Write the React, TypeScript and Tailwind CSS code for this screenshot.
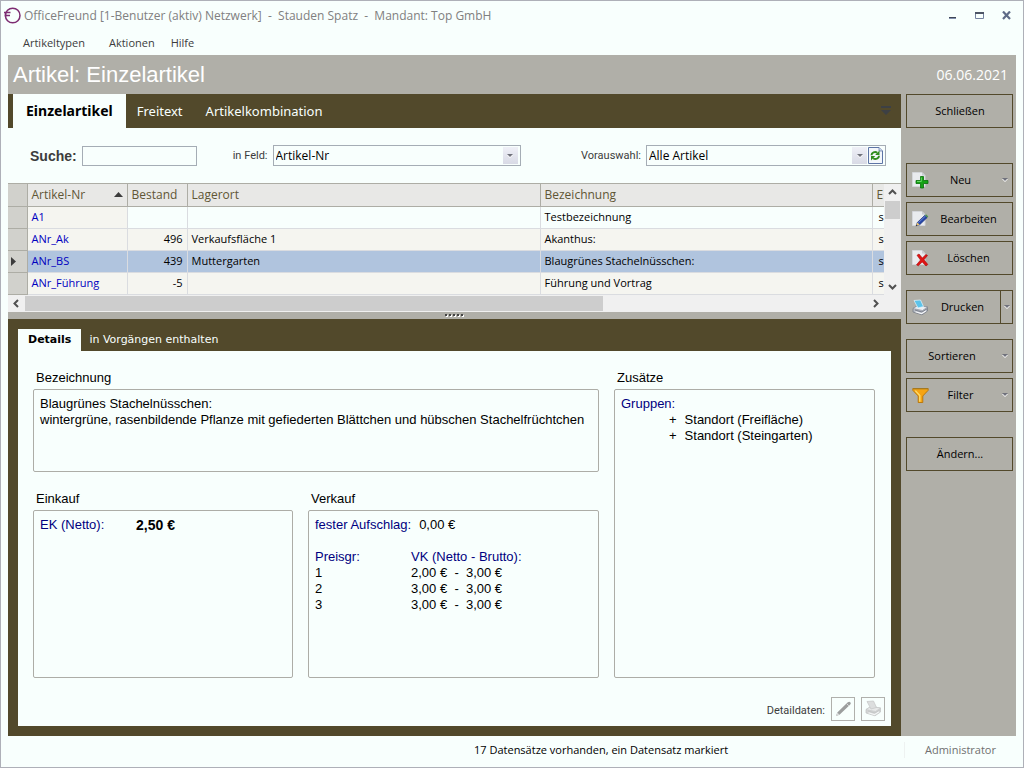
import { useState } from 'react';
import type { ReactNode } from 'react';

interface Article {
  nr: string;
  stock: string;
  place: string;
  label: string;
  shaded: boolean;
}

const articles: Article[] = [
  { nr: 'A1', stock: '', place: '', label: 'Testbezeichnung', shaded: false },
  { nr: 'ANr_Ak', stock: '496', place: 'Verkaufsfläche 1', label: 'Akanthus:', shaded: true },
  { nr: 'ANr_BS', stock: '439', place: 'Muttergarten', label: 'Blaugrünes Stachelnüsschen:', shaded: true },
  { nr: 'ANr_Führung', stock: '-5', place: '', label: 'Führung und Vortrag', shaded: true },
];

const prices = [
  { group: '1', net: '2,00 €', gross: '3,00 €' },
  { group: '2', net: '3,00 €', gross: '3,00 €' },
  { group: '3', net: '3,00 €', gross: '3,00 €' },
];

const Logo = () => (
  <svg width="17" height="17" viewBox="0 0 17 17" fill="none" stroke="#7d2c72" strokeWidth="1.5">
    <circle cx="8.7" cy="8.5" r="7.3" />
    <path d="M0 5.500H6.500M1 8.500H6M1.500 5v4.500" />
  </svg>
);

const Caret = ({ className }: { className?: string }) => (
  <svg width="6" height="4" viewBox="0 0 6 4" className={className}>
    <path d="M0 1h6L3 4z" fill="#fff" />
    <path d="M0 0h6L3 3z" fill="#70727c" />
  </svg>
);

const Sheet = () => (
  <>
    <path d="M0.5 0.5H10L13 3.5V14.5H0.5z" fill="#e9ebee" stroke="#d4d6da" />
    <path d="M10 0.5V3.5H13z" fill="#c9ccd2" />
  </>
);

const NewIcon = () => (
  <svg width="17" height="17" viewBox="0 0 17 17">
    <Sheet />
    <path d="M8.5 4.5h3v4h4.5v3h-4.500v4.500h-3v-4.500h-4.500v-3h4.500z" fill="#16a316" stroke="#087008" strokeWidth="0.8" />
    <path d="M9.300 5.500v4h-4.300" fill="none" stroke="#67d867" />
  </svg>
);

const EditIcon = () => (
  <svg width="17" height="17" viewBox="0 0 17 17">
    <Sheet />
    <path d="M4.200 14.800L5.300 11.500L12.800 4.300L15.200 6.500L7.700 13.800z" fill="#2545a8" stroke="#152a70" strokeWidth="0.6" />
    <path d="M12.800 4.300L14 3.200L16.300 5.400L15.200 6.500z" fill="#4a8f50" />
    <path d="M4.200 14.800L5.300 11.500L7.700 13.800z" fill="#f0c66a" />
    <path d="M6.300 11.800L13.500 5" stroke="#7f9be0" strokeWidth="0.8" />
    <path d="M3.800 15.200l.6-1.500.9.900z" fill="#222" />
  </svg>
);

const DeleteIcon = () => (
  <svg width="17" height="17" viewBox="0 0 17 17">
    <Sheet />
    <path d="M5 5.300L7 4L10.300 8L14 4.500L15.500 5.500L12 9.800L15.800 14.500L14 16L10.200 12L6.300 15.800L4.500 14.800L8.500 10z" fill="#e01414" stroke="#a80808" strokeWidth="0.600" />
  </svg>
);

const PrinterIcon = ({ muted }: { muted?: boolean }) => (
  <svg width="17" height="17" viewBox="0 0 17 17">
    <path d="M1 9.500L6 6.500L15.500 8V12L10 15.800L1 13z" fill={muted ? '#d2d4d4' : '#b7bcc5'} stroke={muted ? '#c4c6c6' : '#777d88'} strokeWidth="0.8" />
    <path d="M1 9.500L6 6.500L15.500 8L10.500 11.500z" fill={muted ? '#e6e8e8' : '#eceef2'} stroke={muted ? '#c4c6c6' : '#858b96'} strokeWidth="0.600" />
    <path d="M2 1.500L8.500 1L11.500 7.500L6 9z" fill={muted ? '#dcdede' : '#5cc3ea'} stroke={muted ? '#c4c6c6' : '#e4f5fc'} strokeWidth="0.700" />
    <path d="M3.500 12.800L9.500 14.600L14 11.800" fill="none" stroke={muted ? '#f4f6f6' : '#f7f8fa'} strokeWidth="1.200" />
    <path d="M3 11L10 13L15 9.800" fill="none" stroke={muted ? '#bfc1c1' : '#636975'} strokeWidth="0.700" />
  </svg>
);

const FilterIcon = () => (
  <svg width="17" height="17" viewBox="0 0 17 17">
    <path d="M0.800 1.500H16.200V3.300L10.800 9V15.500H6.200V9L0.800 3.300z" fill="#f6a413" stroke="#b87508" strokeWidth="0.900" />
    <path d="M3.300 3.600L7.800 8.500V14.800" fill="none" stroke="#ffdc67" strokeWidth="1.400" />
    <path d="M1 1.800H16" stroke="#9a7a2a" />
  </svg>
);

const RefreshIcon = () => (
  <svg width="15" height="17" viewBox="0 0 15 17">
    <path d="M0.500 0.500H11L14.500 4V16.500H0.500z" fill="#f3f7fb" stroke="#5d74a5" />
    <path d="M11 0.500V4H14.500" fill="#cdd8ea" stroke="#5d74a5" strokeWidth="0.700" />
    <path d="M3.500 8.200C3.500 5.500 7 4 9.300 5.700" fill="none" stroke="#2f8c1d" strokeWidth="2" />
    <path d="M11.500 3.500V8H7.200z" fill="#2f8c1d" />
    <path d="M11 8.800C11 11.500 7.500 13 5.200 11.300" fill="none" stroke="#2f8c1d" strokeWidth="2" />
    <path d="M3 13.500V9H7.300z" fill="#2f8c1d" />
  </svg>
);

const PencilIcon = () => (
  <svg width="17" height="17" viewBox="0 0 17 17">
    <path d="M1 16L2.300 12.500L12.500 2.500Q14.500 1 15.500 2.500Q16.500 3.500 14.800 5L4.500 14.800z" fill="#9c9e9e" />
    <path d="M1 16L2.300 12.500L4.500 14.800z" fill="#d8dada" />
    <path d="M11.500 3.500L13.800 5.800" stroke="#d8dada" />
  </svg>
);

interface SideButtonProps {
  title: string;
  icon?: ReactNode;
  menu?: boolean;
  split?: boolean;
  className?: string;
}

const SideButton = ({ title, icon, menu, split, className = '' }: SideButtonProps) => (
  <div className={`flex h-[34px] border border-[#52492b] text-black ${className}`}>
    <button type="button" className="flex min-w-0 flex-1 items-center pl-[5px] pr-1">
      {icon && <span className="w-[17px] shrink-0">{icon}</span>}
      <span className={`flex-1 text-center ${menu ? 'pr-2.5' : ''}`}>{title}</span>
      {menu && <Caret />}
    </button>
    {split && (
      <button type="button" aria-label={`${title} Optionen`} className="flex w-3 items-center justify-center border-l border-[#52492b]">
        <Caret />
      </button>
    )}
  </div>
);

interface DropDownProps {
  id: string;
  value: string;
  className: string;
  children?: ReactNode;
}

const DropDown = ({ id, value, className, children }: DropDownProps) => (
  <div className={`relative flex h-[21px] border border-[#a5adb5] ${className}`}>
    <select id={id} className="min-w-0 flex-1 appearance-none bg-transparent pl-0.5 text-black outline-none">
      <option>{value}</option>
    </select>
    <span className={`pointer-events-none absolute top-px flex h-[17px] w-[15px] items-center justify-center bg-linear-to-b from-[#eff0f7] to-[#d8dae5] ${children ? 'right-[18px]' : 'right-0.5'}`}>
      <Caret />
    </span>
    {children}
  </div>
);

const Chevron = ({ d }: { d: string }) => (
  <svg width="9" height="9" viewBox="0 0 9 9" fill="none" stroke="#505050" strokeWidth="2">
    <path d={d} />
  </svg>
);

const Group = ({ title, className = '', children }: { title: string; className?: string; children: ReactNode }) => (
  <section className={`flex flex-col ${className}`}>
    <h3 className="h-[22px] pl-[3px] leading-[22px]">{title}</h3>
    <div className="flex-1 rounded-xs border border-[#adada7] px-1.5 py-1.5">{children}</div>
  </section>
);

const ArticleTable = () => (
  <table className="w-full table-fixed border-collapse">
    <colgroup>
      <col className="w-[19px]" />
      <col className="w-[100px]" />
      <col className="w-[60px]" />
      <col className="w-[353px]" />
      <col />
      <col className="w-3" />
    </colgroup>
    <thead>
      <tr className="h-[22px] bg-[#e8e8e6] text-left text-[#5f5635]">
        <th className="border-r border-b border-[#adada5] bg-[#d1d1cc]"></th>
        <th className="border-r border-b border-[#adada5] px-1 font-normal">
          <span className="flex items-center justify-between">
            Artikel-Nr
            <svg width="9" height="5" viewBox="0 0 9 5"><path d="M0 5L4.500 0L9 5z" fill="#3c3c3c" /></svg>
          </span>
        </th>
        <th className="border-r border-b border-[#adada5] px-1 font-normal">Bestand</th>
        <th className="border-r border-b border-[#adada5] px-1 font-normal">Lagerort</th>
        <th className="border-r border-b border-[#adada5] px-1 font-normal">Bezeichnung</th>
        <th className="overflow-hidden border-b border-[#adada5] pl-1 font-normal">E</th>
      </tr>
    </thead>
    <tbody className="text-[11px] text-black">
      {articles.map((row) => {
        const active = row.nr === 'ANr_BS';
        const bg = active ? 'bg-[#b0c4de]' : row.shaded ? 'bg-[#f5f5f0]' : '';
        return (
          <tr key={row.nr} className={`h-[22px] ${bg}`}>
            <td className="border-r border-b border-[#adada5] bg-[#d1d1cc] pl-[3px]">
              {active && <svg width="5" height="9" viewBox="0 0 5 9"><path d="M0 0L5 4.500L0 9z" fill="#3c3c3c" /></svg>}
            </td>
            <td className={`border-r border-b border-[#dadce0] px-1 text-[#0000c0] ${active ? '' : 'bg-[#f5f5f0]'}`}>{row.nr}</td>
            <td className="border-r border-b border-[#dadce0] px-1 text-right">{row.stock}</td>
            <td className="border-r border-b border-[#dadce0] px-1">{row.place}</td>
            <td className="border-r border-b border-[#dadce0] px-1">{row.label}</td>
            <td className="overflow-hidden border-b border-[#dadce0] pl-1.5">s</td>
          </tr>
        );
      })}
    </tbody>
  </table>
);

const App = () => {
  const [search, setSearch] = useState('');

  return (
    <div className="flex min-h-screen flex-col border border-[#aeb0b8] bg-[#f8fffd] px-[7px] font-['Open_Sans','Noto_Sans',sans-serif] text-[12px] leading-4 text-[#3c3c3c]">
      {/* Title bar */}
      <header className="flex h-[29px] items-center justify-between text-[#808080]">
        <div className="-ml-1 flex items-center gap-[3px]">
          <Logo />
          <h1 className="whitespace-pre">OfficeFreund [1-Benutzer (aktiv) Netzwerk]  -  Stauden Spatz  -  Mandant: Top GmbH</h1>
        </div>
        <div className="flex items-center gap-[18px] pr-[5px]">
          <button type="button" aria-label="Minimieren">
            <svg width="9" height="9" viewBox="0 0 9 9"><path d="M1 6h7v1H1z" fill="#3f4656" /><path d="M1 7h7v1H1z" fill="#8290ae" /></svg>
          </button>
          <button type="button" aria-label="Maximieren">
            <svg width="9" height="9" viewBox="0 0 9 9"><path d="M0.500 1.500h8v6h-8z" fill="none" stroke="#7582a0" /><path d="M0 1h9v2H0z" fill="#4d5566" /></svg>
          </button>
          <button type="button" aria-label="Fenster schließen">
            <svg width="9" height="9" viewBox="0 0 9 9"><path d="M1 0.500L8 8M8 0.500L1 8" stroke="#5f6b87" strokeWidth="2.200" /></svg>
          </button>
        </div>
      </header>

      <nav className="flex h-[25px] items-center gap-4 pl-[15px] text-[11px]">
        <a href="#artikeltypen" className="pr-2">Artikeltypen</a>
        <a href="#aktionen">Aktionen</a>
        <a href="#hilfe">Hilfe</a>
      </nav>

      <div className="flex h-[39px] items-center justify-between bg-[#b0afa8] pl-[5px] pr-2 text-white">
        <h2 className="font-['Liberation_Sans',sans-serif] text-[22px] leading-6">Artikel: Einzelartikel</h2>
        <time className="text-[14px]">06.06.2021</time>
      </div>

      <div className="flex flex-1">
        <main className="flex min-w-0 flex-1 flex-col">
          {/* Article type tabs */}
          <div className="flex h-[34px] items-center bg-[#52492b] px-[5px] pb-px font-['Noto_Sans',sans-serif] text-[13px] text-[#f8fffd]">
            <button type="button" className="-mb-px h-[34px] bg-[#f8fffd] px-[13px] pb-px text-[14px] font-bold text-black">Einzelartikel</button>
            <button type="button" className="px-[11px]">Freitext</button>
            <button type="button" className="px-3">Artikelkombination</button>
            <button type="button" aria-label="Weitere Register" className="ml-auto mr-[5px]">
              <svg width="10" height="9" viewBox="0 0 10 9" fill="#3d4044"><path d="M0 0h10v2H0zM0 4h10L5 9z" /></svg>
            </button>
          </div>

          <div className="flex h-[55px] items-center pl-[22px] pr-[15px]">
            <label htmlFor="search" className="mr-[5px] font-['Liberation_Sans',sans-serif] text-[14px] font-bold">Suche:</label>
            <input
              id="search"
              value={search}
              onChange={(e) => setSearch(e.target.value)}
              className="h-5 w-[115px] border border-[#a5adb5] px-1 outline-none"
            />
            <label htmlFor="field" className="mr-[5px] ml-9 font-['Roboto',sans-serif] text-[11px]">in Feld:</label>
            <DropDown id="field" value="Artikel-Nr" className="w-[248px]" />
            <label htmlFor="preset" className="mr-[5px] ml-auto font-['Roboto',sans-serif] text-[11px]">Vorauswahl:</label>
            <DropDown id="preset" value="Alle Artikel" className="w-[240px]">
              <button type="button" aria-label="Aktualisieren" className="mr-0.5 flex items-center">
                <RefreshIcon />
              </button>
            </DropDown>
          </div>

          {/* Article list */}
          <div className="border-t border-[#adada5]">
            <div className="flex">
              <div className="min-w-0 flex-1">
                <ArticleTable />
              </div>
              <div className="flex w-[17px] flex-col items-center bg-[#f0f0f0]">
                <div className="flex h-[17px] items-center"><Chevron d="M1 6L4.500 2.500L8 6" /></div>
                <div className="h-[18px] w-[15px] bg-[#cdcdcd]" />
                <div className="mt-auto flex h-[17px] items-center"><Chevron d="M1 3L4.500 6.500L8 3" /></div>
              </div>
            </div>
            <div className="flex h-[17px] items-center bg-[#f0f0f0] pr-[17px]">
              <div className="flex w-[17px] justify-center"><Chevron d="M6 1L2.500 4.500L6 8" /></div>
              <div className="h-[15px] w-[66%] bg-[#cdcdcd]" />
              <div className="ml-auto flex w-[17px] justify-center"><Chevron d="M3 1L6.500 4.500L3 8" /></div>
            </div>
          </div>

          <div className="flex h-[7px] items-center justify-center bg-[#b0afa8]">
            <svg width="20" height="3" viewBox="0 0 20 3">
              <path d="M1 2h18" stroke="#fff" strokeWidth="2" strokeDasharray="2 2" />
              <path d="M0 1h18" stroke="#444" strokeWidth="2" strokeDasharray="2 2" />
            </svg>
          </div>

          {/* Detail area */}
          <div className="flex flex-1 flex-col bg-[#52492b] px-2.5 pt-2.5 pb-2.5">
            <div className="flex h-[22px] items-center font-['DejaVu_Sans',sans-serif] text-[11px] text-[#f8fffd]">
              <button type="button" className="h-full bg-[#f8fffd] px-2.5 font-bold text-black">Details</button>
              <button type="button" className="px-2">in Vorgängen enthalten</button>
            </div>
            <div className="flex flex-1 flex-col bg-[#f8fffd] pt-4 pr-4 pl-[15px]">
              <div className="grid grid-cols-[260fr_291fr_261fr] grid-rows-[105px_190px] gap-x-[15px] gap-y-4 font-['Liberation_Sans',sans-serif] text-[13px] text-black">
                <Group title="Bezeichnung" className="col-span-2">
                  <p>Blaugrünes Stachelnüsschen:</p>
                  <p>wintergrüne, rasenbildende Pflanze mit gefiederten Blättchen und hübschen Stachelfrüchtchen</p>
                </Group>
                <Group title="Zusätze" className="row-span-2">
                  <p className="text-[#000080]">Gruppen:</p>
                  <ul className="pl-12">
                    <li className="flex gap-2"><span>+</span>Standort (Freifläche)</li>
                    <li className="flex gap-2"><span>+</span>Standort (Steingarten)</li>
                  </ul>
                </Group>
                <Group title="Einkauf">
                  <p className="flex">
                    <span className="w-24 text-[#000080]">EK (Netto):</span>
                    <strong className="text-[14px]">2,50 €</strong>
                  </p>
                </Group>
                <Group title="Verkauf">
                  <p className="mb-4">
                    <span className="mr-2 text-[#000080]">fester Aufschlag:</span>0,00 €
                  </p>
                  <table>
                    <thead>
                      <tr className="text-left text-[#000080]">
                        <th className="w-24 font-normal">Preisgr:</th>
                        <th className="font-normal">VK (Netto - Brutto):</th>
                      </tr>
                    </thead>
                    <tbody>
                      {prices.map((p) => (
                        <tr key={p.group}>
                          <td>{p.group}</td>
                          <td className="whitespace-pre">{p.net}  -  {p.gross}</td>
                        </tr>
                      ))}
                    </tbody>
                  </table>
                </Group>
              </div>
              <div className="-mr-2.5 flex flex-1 items-center justify-end pt-[14px]">
                <span className="mr-1.5 pt-1 font-['Roboto',sans-serif] text-[11px]">Detaildaten:</span>
                <button type="button" aria-label="Bearbeiten" className="mr-1.5 flex size-6 items-center justify-center border border-[#b0b0ac]">
                  <PencilIcon />
                </button>
                <button type="button" aria-label="Drucken" className="flex size-6 items-center justify-center border border-[#b0b0ac]">
                  <PrinterIcon muted />
                </button>
              </div>
            </div>
          </div>
        </main>

        <aside className="flex w-[115px] flex-col gap-[5px] bg-[#b0afa8] pr-[3px] pl-[5px] text-[11px]">
          <SideButton title="Schließen" className="mb-[30px]" />
          <SideButton title="Neu" icon={<NewIcon />} menu />
          <SideButton title="Bearbeiten" icon={<EditIcon />} />
          <SideButton title="Löschen" icon={<DeleteIcon />} className="mb-2.5" />
          <SideButton title="Drucken" icon={<PrinterIcon />} split className="mb-2.5" />
          <SideButton title="Sortieren" menu />
          <SideButton title="Filter" icon={<FilterIcon />} menu className="mb-5" />
          <SideButton title="Ändern..." />
        </aside>
      </div>

      {/* Status bar */}
      <footer className="flex h-[31px] items-center pb-1 text-[11px]">
        <p className="ml-auto w-[437px] pl-[7px] text-black">17 Datensätze vorhanden, ein Datensatz markiert</p>
        <p className="w-[112px] border-l border-[#eef2f1] text-center text-[#707070]">Administrator</p>
      </footer>
    </div>
  );
};

export default App;
